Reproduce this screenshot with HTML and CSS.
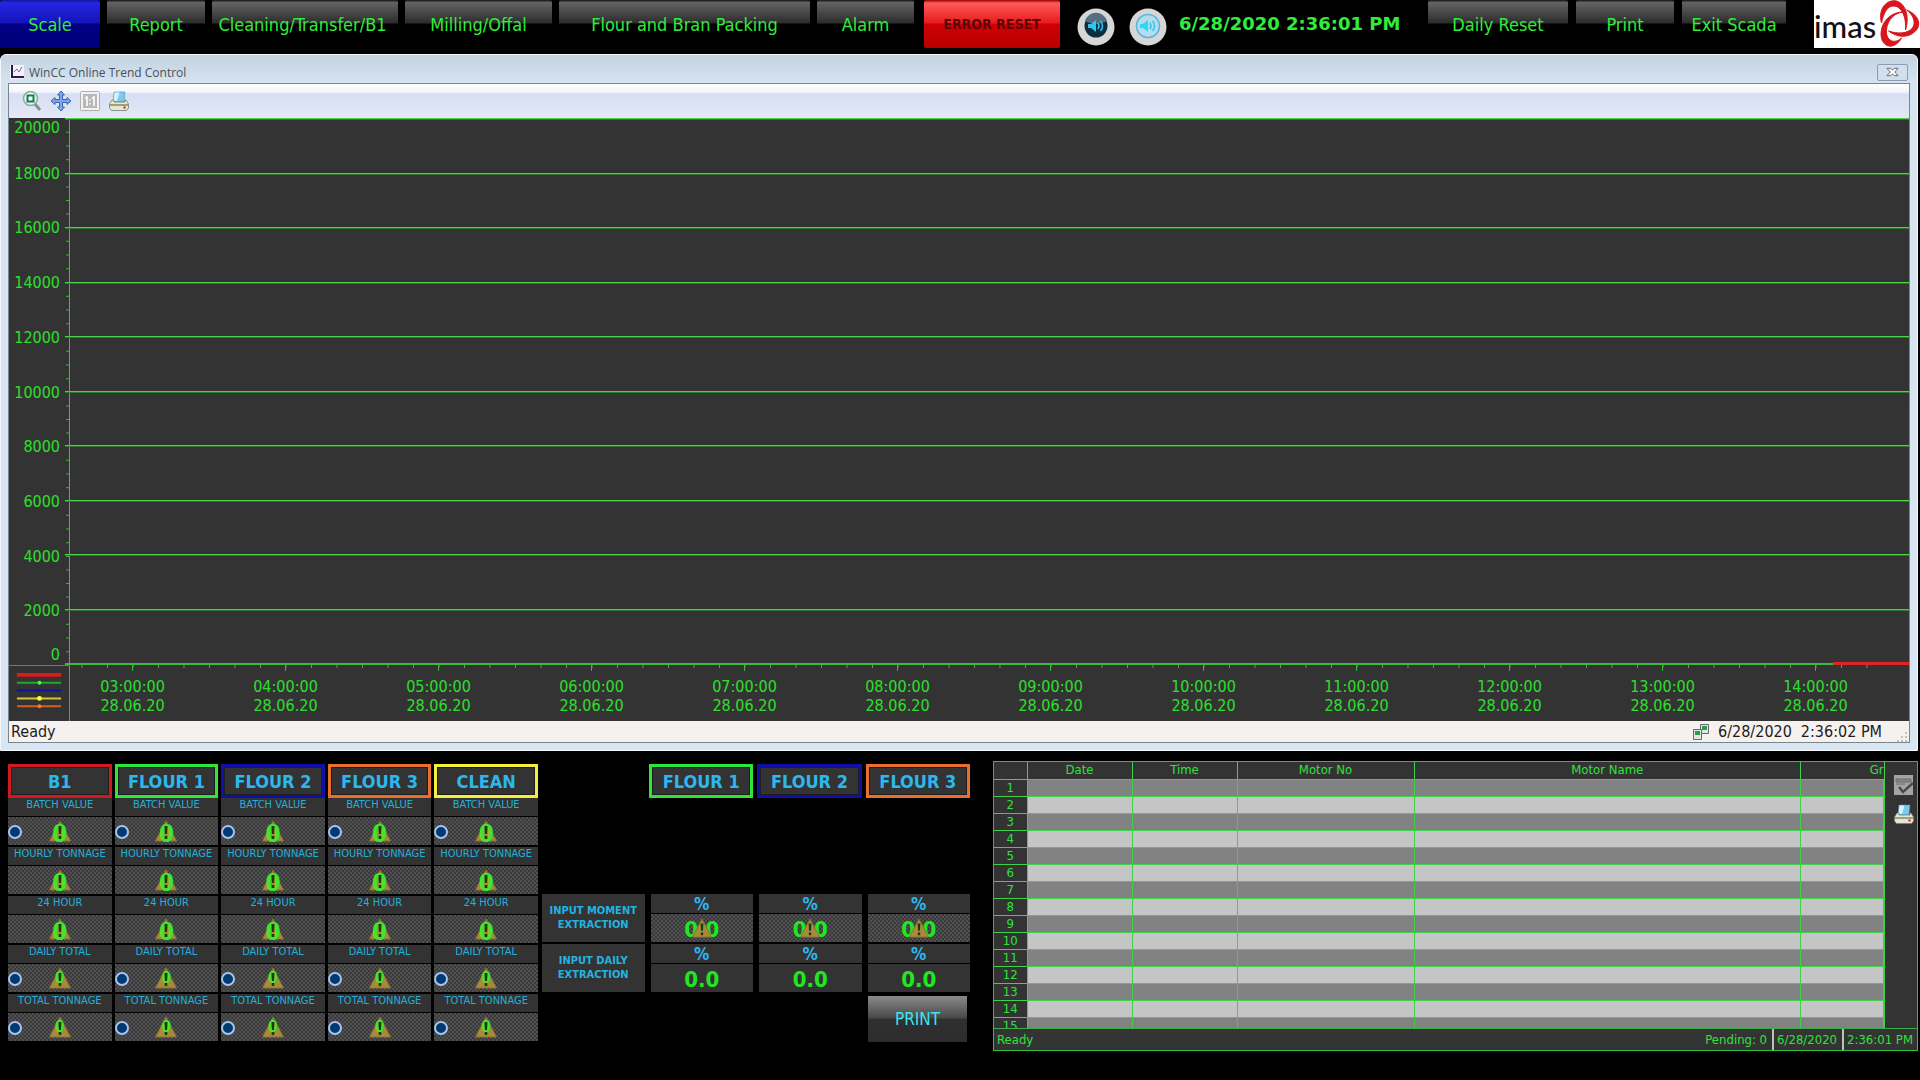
FILE: index.html
```html
<!DOCTYPE html>
<html lang="en">
<head>
<meta charset="utf-8">
<title>Scada - Scale</title>
<link rel="stylesheet" href="styles.css">
</head>
<body>
<svg class="defs" aria-hidden="true">
  <symbol id="warn" viewBox="0 0 22 22"><path d="M11 1 21.500 21H.5z" fill="#a88a3c" stroke="#8c7030"/></symbol>
  <symbol id="bang" viewBox="0 0 22 22"><path d="M9.500 6h3l-.5 8h-2zM9.700 16h2.600v3H9.700z" fill="#1c3a08"/></symbol>
  <symbol id="printer" viewBox="0 0 20 20">
    <path d="M5 1h11l-1 10H4z" fill="#7cc8ee" stroke="#4a90b8" stroke-width=".6"/><path d="M5.500 1.500h5L8 10H4.500z" fill="#d8f2fc"/>
    <path d="M3 9h2v2h11V9h1l2.500 4v4l-2 2.500h-15L.5 17v-4z" fill="#e4e6da" stroke="#77806c" stroke-width=".8"/>
    <path d="M1 14h18" stroke="#7c9050" stroke-width="1.500"/><circle cx="15.500" cy="16.500" r="1.200" fill="#e03020"/>
  </symbol>
</svg>

<header class="topbar">
  <nav class="nav">
    <button class="tab tab-scale">Scale</button>
    <button class="tab tab-report">Report</button>
    <button class="tab tab-cleaning">Cleaning/Transfer/B1</button>
    <button class="tab tab-milling">Milling/Offal</button>
    <button class="tab tab-packing">Flour and Bran Packing</button>
    <button class="tab tab-alarm">Alarm</button>
    <button class="tab tab-error">ERROR RESET</button>
  </nav>
  <div class="sound">
    <button class="round" aria-label="Sound on"><svg viewBox="0 0 38 38"><circle cx="19" cy="19" r="18.500" fill="#d6d6d6"/><circle cx="19" cy="18" r="11.500" fill="#0b2e40"/><path d="M8 13a11.500 11.500 0 0 1 22 0q-11 6-22 0" fill="#55707e"/><path d="M11 16h3l5-4v12l-5-4h-3z" fill="#2cc8f4"/><path d="M21 15q2 3 0 6M23.500 13q4 5 0 10" fill="none" stroke="#2cc8f4" stroke-width="1.500"/></svg></button>
    <button class="round" aria-label="Sound off"><svg viewBox="0 0 38 38"><circle cx="19" cy="19" r="18.500" fill="#d6d6d6"/><circle cx="19" cy="18" r="11.500" fill="#b4dcea" stroke="#58b4dc" stroke-width="1.500"/><path d="M11 16h3l5-4v12l-5-4h-3z" fill="#2cd8f8"/><path d="M21 15q2 3 0 6M23.500 13q4 5 0 10" fill="none" stroke="#2cc8f4" stroke-width="1.500"/></svg></button>
  </div>
  <time class="clock">6/28/2020 2:36:01 PM</time>
  <div class="actions">
    <button class="tab tab-reset">Daily Reset</button>
    <button class="tab tab-print">Print</button>
    <button class="tab tab-exit">Exit Scada</button>
  </div>
  <div class="logo"><span>imas</span>
    <svg viewBox="0 0 40 48"><g fill="#d9161c" stroke="#d9161c"><path d="M2 23C-2 8 8-1 17 1c10 3 13 17 9 29C27 17 22 6 14 6 7 6 4 14 2 23z"/><path d="M27 10c11 4 16 14 9 21-8 8-19 6-27 0 9 3 19 3 24-3 4-6 0-14-6-18z"/><path d="M24 12C12 13 6 24 7 34c2 9 10 9 15 4-4 8-14 12-19 3-5-11 3-29 21-29z"/></g></svg>
  </div>
</header>

<main class="trend">
  <div class="titlebar">
    <svg class="appicon" viewBox="0 0 14 14"><path d="M0 0h14v14H0z" fill="#f4f0fa"/><path d="M2 0v12h12" fill="none" stroke="#222046" stroke-width="2"/><path d="m4 7 3-3 2 3 3-5" fill="none" stroke="#b050c0"/></svg>
    <h1>WinCC Online Trend Control</h1>
    <button class="close" aria-label="Close"><svg viewBox="0 0 14 10"><path d="M1 1h4l2 2 2-2h4L9.500 5 13 9H9L7 7 5 9H1l3.500-4z" fill="#fff" stroke="#55606e"/></svg></button>
  </div>
  <div class="client">
    <div class="toolbar">
      <button aria-label="Zoom area"><svg viewBox="0 0 20 20"><path d="m13 13 5 6" stroke="#8a8f94" stroke-width="3"/><circle cx="8.500" cy="7.500" r="7" fill="#e6f4ee" stroke="#8fa89c" stroke-width="1.500"/><path d="M5.500 4.500h6v6h-6z" fill="#fff" stroke="#0a8050" stroke-width="2"/></svg></button>
      <button aria-label="Move"><svg viewBox="0 0 20 20"><path d="m10 0 3.500 4h-2v4.500H16v-2l4 3.500-4 3.500v-2h-4.500V16h2L10 20l-3.500-4h2v-4.500H4v2L0 10l4-3.500v2h4.500V4h-2z" fill="#7ea6e4" stroke="#3c64b4"/></svg></button>
      <button aria-label="Original view"><svg viewBox="0 0 20 20"><rect x=".5" y=".5" width="19" height="19" rx="1" fill="#f2f2f2" stroke="#b0b0b0"/><rect x="3" y="3" width="14" height="14" fill="#b8b8b8"/><path d="m5 7 2-1v9M12 7l2-1v9M10 8v1.500M10 12v1.500" fill="none" stroke="#fff" stroke-width="1.600"/></svg></button>
      <button aria-label="Print"><svg><use href="#printer"/></svg></button>
    </div>
    <div class="chart">
      <ol class="yaxis">
        <li><span>20000</span></li><li><span>18000</span></li><li><span>16000</span></li><li><span>14000</span></li><li><span>12000</span></li><li><span>10000</span></li><li><span>8000</span></li><li><span>6000</span></li><li><span>4000</span></li><li><span>2000</span></li>
        <li class="zero"><span>0</span></li>
      </ol>
      <div class="plot">
        <i></i><i></i><i></i><i></i><i></i><i></i><i></i><i></i><i></i><i></i>
        <b class="series"></b>
      </div>
      <svg class="legend" viewBox="0 0 61 56"><path d="M8 9h45" stroke="#e0181c" stroke-width="4"/><path d="M8 17h45" stroke="#28a428" stroke-width="2"/><path d="M8 25h45" stroke="#1212a0" stroke-width="2"/><path d="M8 33h45" stroke="#d4c830" stroke-width="2"/><path d="M8 41h45" stroke="#d06020" stroke-width="2"/><circle cx="31" cy="17" r="2" fill="#4f4"/><circle cx="31" cy="25" r="2" fill="#1212c0"/><circle cx="31" cy="33" r="2.500" fill="#ff3"/><circle cx="31" cy="41" r="2" fill="#f73"/></svg>
      <div class="xaxis">
        <ol>
          <li>03:00:00<br>28.06.20</li><li>04:00:00<br>28.06.20</li><li>05:00:00<br>28.06.20</li><li>06:00:00<br>28.06.20</li><li>07:00:00<br>28.06.20</li><li>08:00:00<br>28.06.20</li><li>09:00:00<br>28.06.20</li><li>10:00:00<br>28.06.20</li><li>11:00:00<br>28.06.20</li><li>12:00:00<br>28.06.20</li><li>13:00:00<br>28.06.20</li><li>14:00:00<br>28.06.20</li>
        </ol>
      </div>
    </div>
    <div class="status">
      <span class="grow">Ready</span>
      <svg viewBox="0 0 16 16"><path d="M7.500.5h8v9h-8z" fill="#dfe8df" stroke="#667"/><path d="M9 2h5v4H9z" fill="#2c9a48"/><path d="M.5 5.500h8v10h-8z" fill="#dfe8df" stroke="#667"/><path d="M2 7h5v4H2z" fill="#2c9a48"/></svg>
      <span>6/28/2020</span><span>2:36:02 PM</span>
      <svg class="grip" viewBox="0 0 10 10"><path d="M8 0h2v2H8zM4 4h2v2H4zM8 4h2v2H8zM0 8h2v2H0zM4 8h2v2H4zM8 8h2v2H8z" fill="#c4bfba"/></svg>
    </div>
  </div>
</main>

<section class="bottom">
  <div class="scales">
    <section class="scale">
      <h2 class="red">B1</h2>
      <h3>BATCH VALUE</h3><div class="val"><button class="dot" aria-label="Reset"></button><svg><use href="#warn"/></svg><span>0</span><svg><use href="#bang"/></svg></div>
      <h3>HOURLY TONNAGE</h3><div class="val"><svg><use href="#warn"/></svg><span>0</span><svg><use href="#bang"/></svg></div>
      <h3>24 HOUR</h3><div class="val"><svg><use href="#warn"/></svg><span>0</span><svg><use href="#bang"/></svg></div>
      <h3>DAILY TOTAL</h3><div class="val small"><button class="dot" aria-label="Reset"></button><svg><use href="#warn"/></svg><span>0</span><svg><use href="#bang"/></svg></div>
      <h3>TOTAL TONNAGE</h3><div class="val small"><button class="dot" aria-label="Reset"></button><svg><use href="#warn"/></svg><span>0</span><svg><use href="#bang"/></svg></div>
    </section>
    <section class="scale">
      <h2 class="green">FLOUR 1</h2>
      <h3>BATCH VALUE</h3><div class="val"><button class="dot" aria-label="Reset"></button><svg><use href="#warn"/></svg><span>0</span><svg><use href="#bang"/></svg></div>
      <h3>HOURLY TONNAGE</h3><div class="val"><svg><use href="#warn"/></svg><span>0</span><svg><use href="#bang"/></svg></div>
      <h3>24 HOUR</h3><div class="val"><svg><use href="#warn"/></svg><span>0</span><svg><use href="#bang"/></svg></div>
      <h3>DAILY TOTAL</h3><div class="val small"><button class="dot" aria-label="Reset"></button><svg><use href="#warn"/></svg><span>0</span><svg><use href="#bang"/></svg></div>
      <h3>TOTAL TONNAGE</h3><div class="val small"><button class="dot" aria-label="Reset"></button><svg><use href="#warn"/></svg><span>0</span><svg><use href="#bang"/></svg></div>
    </section>
    <section class="scale">
      <h2 class="blue">FLOUR 2</h2>
      <h3>BATCH VALUE</h3><div class="val"><button class="dot" aria-label="Reset"></button><svg><use href="#warn"/></svg><span>0</span><svg><use href="#bang"/></svg></div>
      <h3>HOURLY TONNAGE</h3><div class="val"><svg><use href="#warn"/></svg><span>0</span><svg><use href="#bang"/></svg></div>
      <h3>24 HOUR</h3><div class="val"><svg><use href="#warn"/></svg><span>0</span><svg><use href="#bang"/></svg></div>
      <h3>DAILY TOTAL</h3><div class="val small"><button class="dot" aria-label="Reset"></button><svg><use href="#warn"/></svg><span>0</span><svg><use href="#bang"/></svg></div>
      <h3>TOTAL TONNAGE</h3><div class="val small"><button class="dot" aria-label="Reset"></button><svg><use href="#warn"/></svg><span>0</span><svg><use href="#bang"/></svg></div>
    </section>
    <section class="scale">
      <h2 class="orange">FLOUR 3</h2>
      <h3>BATCH VALUE</h3><div class="val"><button class="dot" aria-label="Reset"></button><svg><use href="#warn"/></svg><span>0</span><svg><use href="#bang"/></svg></div>
      <h3>HOURLY TONNAGE</h3><div class="val"><svg><use href="#warn"/></svg><span>0</span><svg><use href="#bang"/></svg></div>
      <h3>24 HOUR</h3><div class="val"><svg><use href="#warn"/></svg><span>0</span><svg><use href="#bang"/></svg></div>
      <h3>DAILY TOTAL</h3><div class="val small"><button class="dot" aria-label="Reset"></button><svg><use href="#warn"/></svg><span>0</span><svg><use href="#bang"/></svg></div>
      <h3>TOTAL TONNAGE</h3><div class="val small"><button class="dot" aria-label="Reset"></button><svg><use href="#warn"/></svg><span>0</span><svg><use href="#bang"/></svg></div>
    </section>
    <section class="scale">
      <h2 class="yellow">CLEAN</h2>
      <h3>BATCH VALUE</h3><div class="val"><button class="dot" aria-label="Reset"></button><svg><use href="#warn"/></svg><span>0</span><svg><use href="#bang"/></svg></div>
      <h3>HOURLY TONNAGE</h3><div class="val"><svg><use href="#warn"/></svg><span>0</span><svg><use href="#bang"/></svg></div>
      <h3>24 HOUR</h3><div class="val"><svg><use href="#warn"/></svg><span>0</span><svg><use href="#bang"/></svg></div>
      <h3>DAILY TOTAL</h3><div class="val small"><button class="dot" aria-label="Reset"></button><svg><use href="#warn"/></svg><span>0</span><svg><use href="#bang"/></svg></div>
      <h3>TOTAL TONNAGE</h3><div class="val small"><button class="dot" aria-label="Reset"></button><svg><use href="#warn"/></svg><span>0</span><svg><use href="#bang"/></svg></div>
    </section>
  </div>

  <div class="extraction">
    <div class="heads"><h2 class="green">FLOUR 1</h2><h2 class="blue">FLOUR 2</h2><h2 class="orange">FLOUR 3</h2></div>
    <div class="inputs">
      <h4>INPUT MOMENT EXTRACTION</h4>
      <div class="pct"><b>%</b><div class="num hatch"><span>0.0</span><svg><use href="#warn"/></svg><svg><use href="#bang"/></svg></div></div>
      <div class="pct"><b>%</b><div class="num hatch"><span>0.0</span><svg><use href="#warn"/></svg><svg><use href="#bang"/></svg></div></div>
      <div class="pct"><b>%</b><div class="num hatch"><span>0.0</span><svg><use href="#warn"/></svg><svg><use href="#bang"/></svg></div></div>
      <h4>INPUT DAILY EXTRACTION</h4>
      <div class="pct"><b>%</b><div class="num"><span>0.0</span></div></div>
      <div class="pct"><b>%</b><div class="num"><span>0.0</span></div></div>
      <div class="pct"><b>%</b><div class="num"><span>0.0</span></div></div>
    </div>
    <button class="printbtn">PRINT</button>
  </div>

  <div class="alarms">
    <div class="alarm-body">
      <div class="tablebox">
        <table>
          <thead><tr><th class="c-no"></th><th class="c-date">Date</th><th class="c-date">Time</th><th class="c-motor">Motor No</th><th>Motor Name</th><th class="c-last">Gr</th></tr></thead>
          <tbody>
            <tr><th>1</th><td></td><td></td><td></td><td></td><td></td></tr>
            <tr><th>2</th><td></td><td></td><td></td><td></td><td></td></tr>
            <tr><th>3</th><td></td><td></td><td></td><td></td><td></td></tr>
            <tr><th>4</th><td></td><td></td><td></td><td></td><td></td></tr>
            <tr><th>5</th><td></td><td></td><td></td><td></td><td></td></tr>
            <tr><th>6</th><td></td><td></td><td></td><td></td><td></td></tr>
            <tr><th>7</th><td></td><td></td><td></td><td></td><td></td></tr>
            <tr><th>8</th><td></td><td></td><td></td><td></td><td></td></tr>
            <tr><th>9</th><td></td><td></td><td></td><td></td><td></td></tr>
            <tr><th>10</th><td></td><td></td><td></td><td></td><td></td></tr>
            <tr><th>11</th><td></td><td></td><td></td><td></td><td></td></tr>
            <tr><th>12</th><td></td><td></td><td></td><td></td><td></td></tr>
            <tr><th>13</th><td></td><td></td><td></td><td></td><td></td></tr>
            <tr><th>14</th><td></td><td></td><td></td><td></td><td></td></tr>
            <tr><th>15</th><td></td><td></td><td></td><td></td><td></td></tr>
          </tbody>
        </table>
      </div>
      <div class="side">
        <button aria-label="Acknowledge"><svg viewBox="0 0 20 20"><path d="M0 0h19v20H0z" fill="#a4a4a4"/><path d="M2 4h15v3H2zM2 9h9" fill="#888" stroke="#6a6a6a"/><path d="m5 12 4 5 10-9" fill="none" stroke="#4a4a4a" stroke-width="2.500"/></svg></button>
        <button aria-label="Print"><svg><use href="#printer"/></svg></button>
      </div>
    </div>
    <div class="alarm-status"><span class="grow">Ready</span><span>Pending: 0</span><span class="bar">6/28/2020</span><span class="bar">2:36:01 PM</span></div>
  </div>
</section>
</body>
</html>
```

FILE: styles.css
```css
* { box-sizing: border-box; margin: 0; }
body {
  min-height: 100vh;
  display: flex;
  flex-direction: column;
  background: #000;
  font-family: "DejaVu Sans Condensed", "DejaVu Sans", sans-serif;
}
ol { list-style: none; padding: 0; }
button { font: inherit; border: 0; padding: 0; background: none; display: grid; place-items: center; }
svg { display: block; }
.defs { position: absolute; width: 0; height: 0; }
.grow { flex: 1; }

/* top bar */
.topbar { display: flex; height: 54px; padding-bottom: 6px; }
.nav { display: flex; gap: 7px; }
.tab {
  height: 48px;
  color: #2fee3a;
  font-size: 18px;
  white-space: nowrap;
  border-radius: 2px;
  background: linear-gradient(#222 1px, #646464 2px, #2c2c2c 23px, #000 24px);
}
.tab-scale { width: 100px; background: linear-gradient(#1414a0, #2626e4 3px, #1414b8 23px, #000082 24px, #00007c); }
.tab-report { width: 98px; }
.tab-cleaning { width: 186px; padding-right: 5px; }
.tab-milling { width: 147px; }
.tab-packing { width: 251px; }
.tab-alarm { width: 97px; }
.tab-error { width: 136px; margin-left: 3px; color: #5c0508; font-size: 14px; font-weight: bold; background: linear-gradient(#900, #ff5a5a 3px, #e81c1c 23px, #d00004 24px, #b80000); }
.sound { display: flex; gap: 14px; padding: 8px 12px 0 17px; }
.round, .round svg { width: 38px; height: 38px; }
.clock { flex: 1; line-height: 48px; font-family: "DejaVu Sans", sans-serif; font-size: 18px; font-weight: bold; color: #2fee3a; white-space: nowrap; }
.actions { display: flex; gap: 8px; }
.tab-reset { width: 140px; }
.tab-print { width: 98px; }
.tab-exit { width: 104px; }
.logo { margin-left: 28px; width: 106px; background: #fff; display: flex; justify-content: space-between; overflow: hidden; font: 500 31px/52px Lato, sans-serif; color: #111; }
.logo svg { flex: none; width: 41px; height: 48px; }

/* trend window */
.trend {
  flex: 1;
  display: flex;
  flex-direction: column;
  margin-right: 2px;
  padding: 0 7px 7px;
  border: 1px solid #f4f8fc;
  border-radius: 6px 6px 0 0;
  background: linear-gradient(#c3d2e0, #d6e4f1 28px, #d8e6f4);
}
.titlebar { display: flex; align-items: center; height: 28px; gap: 5px; }
.titlebar h1 { flex: 1; font: 12px "Open Sans", sans-serif; color: #46505c; padding-top: 6px; }
.appicon { width: 14px; height: 14px; margin: 6px 0 0 2px; }
.close { width: 31px; height: 17px; margin: 6px 2px 0 0; border: 1px solid #8c9db4; border-radius: 2px; background: #d2dfec; }
.close svg { width: 13px; height: 10px; }
.client { flex: 1; display: flex; flex-direction: column; border: 1px solid #7c848c; }
.toolbar { display: flex; align-items: center; gap: 9px; height: 34px; padding-left: 13px; background: linear-gradient(#fff, #f4f5fc 8px, #d7dff2 10px, #e4e8f8); }
.toolbar svg, .side svg { width: 20px; height: 20px; }
.chart { flex: 1; display: grid; grid-template: 1fr 56px / 61px 1fr; background: #333; }
.yaxis { display: flex; flex-direction: column; border-right: 1px solid #6f9a6f; }
.yaxis li { flex: 1; position: relative; background: linear-gradient(#38b838 1px, transparent 1px) right top / 3px 25% repeat-y; }
.yaxis span { position: absolute; right: 9px; top: -9px; line-height: 20px; font-size: 16px; color: #2be02b; }
.yaxis li:first-child span { top: 0; }
.yaxis .zero { flex: none; height: 0; }
.yaxis .zero span { top: -20px; }
.plot { position: relative; display: flex; flex-direction: column; border-bottom: 2px solid #3fb83f; margin-left: -5px; }
.plot i { flex: 1; border-top: 1px solid #4ad24a; box-shadow: inset 0 1px #2a7a2a; }
.series { position: absolute; right: 0; bottom: -2px; width: 76px; height: 3px; background: #e02424; }
.legend { width: 61px; height: 56px; border-top: 1px solid #6f7a6f; border-right: 1px solid #7c8a7c; }
.xaxis { overflow: hidden; }
.xaxis ol {
  display: grid;
  grid-template-columns: repeat(12, 1fr);
  margin: 0 17px 0 -14px;
  text-align: center;
  font-size: 16px;
  line-height: 19px;
  color: #2be02b;
}
.xaxis li {
  padding: 12px 0 6px;
  background:
    linear-gradient(#38b838, #38b838) center top / 1px 6px no-repeat,
    linear-gradient(90deg, #38b838 1px, transparent 1px) left top / calc(100% / 6) 3px repeat-x;
}
.status { display: flex; align-items: center; gap: 9px; height: 21px; padding: 0 2px; background: #f5f1ef; color: #1c1c1c; font-size: 16px; }
.status svg { width: 16px; height: 16px; }
.status .grip { width: 10px; height: 10px; margin-left: 6px; align-self: end; }

/* lower panels */
.bottom { display: flex; gap: 4px; padding: 10px 2px 29px 8px; }
.scales { display: grid; grid-template-columns: repeat(5, 1fr); gap: 3px; width: 530px; padding-top: 3px; }
.bottom h2 { height: 34px; border: 3px solid; box-shadow: inset 0 0 0 1px #0006; background: #333; display: grid; place-items: center; font-size: 18px; color: #2cb8ee; }
.bottom .red { border-color: #cf1a1e; }
.bottom .green { border-color: #2ee63a; }
.bottom .blue { border-color: #1010a8; }
.bottom .orange { border-color: #e8702c; }
.bottom .yellow { border-color: #f4ee3c; }
.scale h3 { height: 18px; margin-bottom: 1px; background: #333; color: #22b0dc; font-size: 11px; font-weight: normal; line-height: 14px; text-align: center; white-space: nowrap; }
.val, .hatch { background: repeating-conic-gradient(#3a3a3a 0 25%, #505050 0 50%) 0 0 / 4px 4px; }
.val { position: relative; height: 28px; margin-bottom: 2px; display: grid; place-items: center; }
.val > svg, .val > span, .num > svg, .num > span { grid-area: 1 / 1; width: 22px; height: 22px; }
.val span, .num span { display: grid; place-items: center; font-weight: bold; font-size: 24px; color: #3fe62c; }
.val.small span { font-size: 15px; }
.dot { position: absolute; left: 0; top: 8px; width: 14px; height: 14px; border-radius: 50%; border: 2px solid #a8c4ec; background: #003a72; }

.extraction { display: flex; flex-direction: column; width: 428px; padding-top: 3px; }
.heads { display: grid; grid-template-columns: repeat(3, 1fr); gap: 4px; margin: 0 0 96px 107px; }
.inputs { display: grid; grid-template-columns: repeat(4, 1fr); gap: 2px 6px; }
.inputs h4 { display: grid; place-items: center; padding: 0 6px; background: #333; color: #22b4e0; font-size: 11px; line-height: 14px; text-align: center; }
.pct { display: grid; grid-template-rows: 19px 28px; gap: 1px; }
.pct b { background: #333; color: #2cb8ee; font-size: 17px; line-height: 21px; text-align: center; }
.num { background-color: #333; display: grid; place-items: center; }
.num > span { width: auto; font-size: 22px; color: #1ee81e; }
.num > svg { height: 20px; width: 20px; }
.printbtn { align-self: flex-end; width: 99px; height: 46px; margin: 4px 3px 0 0; color: #3ce4f4; font-size: 17px; background: linear-gradient(#8a8a8a, #484848 22px, #303030 23px, #2c2c2c); }

/* alarm list */
.alarms { flex: 1; margin-left: 19px; border: 1px solid #2fbf3a; background: #333; color: #2fe23a; font-size: 13px; }
.alarm-body { display: flex; height: 267px; border-bottom: 1px solid #3fae46; }
.tablebox { flex: 1; overflow: hidden; border-right: 1px solid #3fd049; }
table { width: 100%; table-layout: fixed; border-collapse: collapse; }
th, td { height: 17px; padding: 0; border: 1px solid #43cf4b; font-weight: normal; line-height: 16px; }
tr:first-child th { border-top: 0; }
tr > :first-child { border-left: 0; }
tbody tr:nth-child(odd) td { background: #828282; }
tbody tr:nth-child(even) td { background: #c5c5c5; }
.c-no { width: 33px; }
.c-date { width: 105px; }
.c-motor { width: 177px; }
.c-last { width: 83px; text-align: right; border-right: 0; }
.side { width: 32px; padding: 13px 0 0 6px; display: flex; flex-direction: column; gap: 9px; }
.alarm-status { display: flex; height: 21px; line-height: 21px; gap: 5px; padding: 0 4px 0 3px; }
.bar { border-left: 2px solid #b8c4b8; padding-left: 3px; }
```
